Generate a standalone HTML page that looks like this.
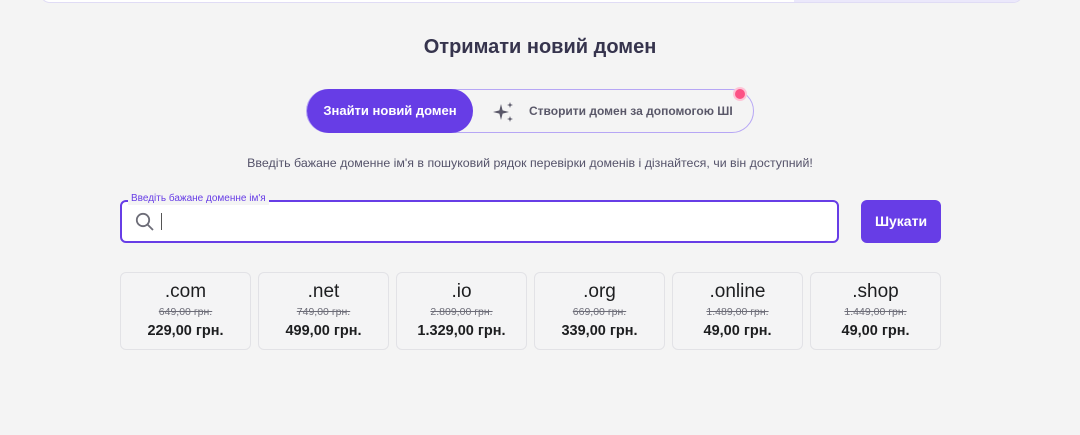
<!DOCTYPE html>
<html><head><meta charset="utf-8"><style>
*{box-sizing:border-box;margin:0;padding:0}
body{width:1080px;height:435px;background:#f4f4f4;font-family:"Liberation Sans",sans-serif;position:relative;overflow:hidden;color:#2f1c6a}
.top{position:absolute;left:40px;top:-20px;width:983px;height:23px;background:#fff;border:1px solid #e0dcf5;border-top:none;border-radius:0 0 10px 10px;overflow:hidden}
.top div{position:absolute;right:0;top:0;width:228px;height:100%;background:#ebe8fb}
h1{position:absolute;top:36px;width:100%;text-align:center;font-size:20px;font-weight:bold;color:#36344d}
.tog{position:absolute;left:306px;top:89px;width:448px;height:44px;border:1px solid #b6a6f5;border-radius:22px;background:#f4f4f4}
.tog .a{position:absolute;left:0;top:-1px;width:166px;height:44px;background:#673de6;border-radius:22px;color:#fff;font-weight:bold;font-size:13px;text-align:center;line-height:44px}
.tog .b{position:absolute;left:222px;top:0;line-height:42px;font-size:12px;font-weight:bold;color:#5a5869}
.dot{position:absolute;left:735px;top:89px;width:10px;height:10px;border-radius:50%;background:#fc5185;box-shadow:0 0 0 2px #fdc4d6}
.desc{position:absolute;top:156px;width:100%;text-align:center;font-size:12.4px;color:#55536a;padding-right:20px}
.inp{position:absolute;left:120px;top:200px;width:719px;height:43px;border:2px solid #673de6;border-radius:6px;background:#fff}
.lab{position:absolute;left:128px;top:193px;font-size:10px;color:#673de6;background:#f4f4f4;padding:0 3px;line-height:12px}
.cur{position:absolute;left:161px;top:213px;width:1px;height:17px;background:#555}
.btn{position:absolute;left:861px;top:200px;width:80px;height:43px;background:#673de6;border-radius:6px;color:#fff;font-weight:bold;font-size:14px;text-align:center;line-height:43px}
.card{position:absolute;top:272px;width:131px;height:78px;border:1px solid #e2e2e6;border-radius:6px;background:#f4f4f5;text-align:center;color:#1d1e20}
.card .t{font-size:19px;margin-top:8px;line-height:22px}
.card .o{font-size:10.5px;color:#6d6d78;text-decoration:line-through;margin-top:3px;line-height:13px}
.card .p{font-size:14.5px;font-weight:bold;margin-top:4px;line-height:17px}
</style></head><body>
<div class="top"><div></div></div>
<h1>Отримати новий домен</h1>
<div class="tog"><div class="a">Знайти новий домен</div>
<svg style="position:absolute;left:186px;top:11px" width="22" height="22" viewBox="0 0 22 22" fill="#5a5869"><path d="M8 3 L9.6 9.4 L16 11 L9.6 12.6 L8 19 L6.4 12.6 L0 11 L6.4 9.4Z"/><path d="M17 1 L17.7 3.3 L20 4 L17.7 4.7 L17 7 L16.3 4.7 L14 4 L16.3 3.3Z"/><path d="M17 15 L17.7 17.3 L20 18 L17.7 18.7 L17 21 L16.3 18.7 L14 18 L16.3 17.3Z"/></svg>
<div class="b">Створити домен за допомогою ШІ</div></div>
<div class="dot"></div>
<div class="desc">Введіть бажане доменне ім'я в пошуковий рядок перевірки доменів і дізнайтеся, чи він доступний!</div>
<div class="inp"></div>
<div class="lab">Введіть бажане доменне ім'я</div>
<svg style="position:absolute;left:135px;top:212px" width="20" height="20" viewBox="0 0 20 20" fill="none" stroke="#6d6d78" stroke-width="1.8"><circle cx="8" cy="8" r="6.2"/><path d="M12.6 12.6 L18 18"/></svg>
<div class="cur"></div>
<div class="btn">Шукати</div>
<div class="card" style="left:120px"><div class="t">.com</div><div class="o">649,00 грн.</div><div class="p">229,00 грн.</div></div>
<div class="card" style="left:258px"><div class="t">.net</div><div class="o">749,00 грн.</div><div class="p">499,00 грн.</div></div>
<div class="card" style="left:396px"><div class="t">.io</div><div class="o">2.809,00 грн.</div><div class="p">1.329,00 грн.</div></div>
<div class="card" style="left:534px"><div class="t">.org</div><div class="o">669,00 грн.</div><div class="p">339,00 грн.</div></div>
<div class="card" style="left:672px"><div class="t">.online</div><div class="o">1.489,00 грн.</div><div class="p">49,00 грн.</div></div>
<div class="card" style="left:810px"><div class="t">.shop</div><div class="o">1.449,00 грн.</div><div class="p">49,00 грн.</div></div>
</body></html>
